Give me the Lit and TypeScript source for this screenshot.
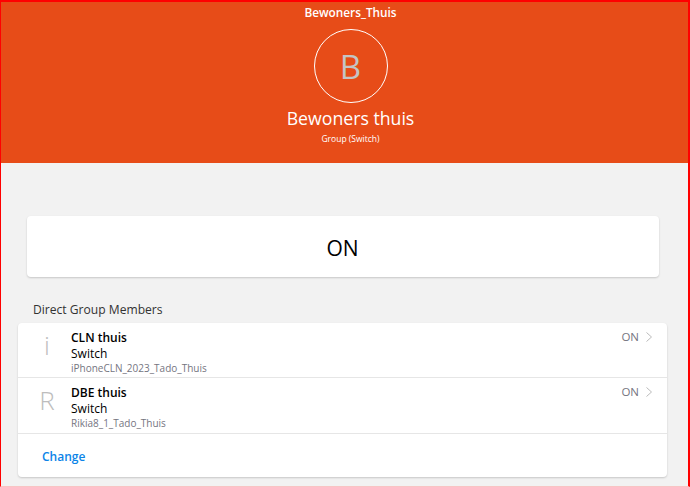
import { LitElement, html, css } from "lit";
import { customElement } from "lit/decorators.js";

const members = [
  { initial: "i", name: "CLN thuis", type: "Switch", id: "iPhoneCLN_2023_Tado_Thuis", state: "ON" },
  { initial: "R", name: "DBE thuis", type: "Switch", id: "Rikia8_1_Tado_Thuis", state: "ON" },
];

@customElement("app-root")
export class AppRoot extends LitElement {
  static styles = css`
    :host {
      display: block;
      box-sizing: border-box;
      width: 690px;
      height: 487px;
      overflow: hidden;
      border: solid #f00;
      border-width: 2px 2px 1px 1px;
      border-bottom-color: #f9c4c4;
      background: #f2f2f2;
      font-family: "Open Sans", "Noto Sans", sans-serif;
      color: #000;
    }

    .header {
      height: 161px;
      padding-left: 12px;
      background: #e74c18;
      color: #fff;
      display: flex;
      flex-direction: column;
      align-items: center;
    }

    .title {
      font-size: 11.8px;
      font-weight: 600;
      line-height: 16px;
      margin-top: 2px;
    }

    .avatar {
      box-sizing: border-box;
      width: 74px;
      height: 74px;
      margin-top: 9px;
      border: 1px solid #fff;
      border-radius: 50%;
      color: #c4c4c4;
      font-size: 33px;
      display: flex;
      align-items: center;
      justify-content: center;
    }

    .name {
      font-size: 17.7px;
      line-height: 24px;
      margin-top: 3px;
    }

    .sub {
      font-size: 8.5px;
      line-height: 12px;
      margin-top: 3px;
    }

    .toggle {
      margin: 53px 29px 0 26px;
      padding: 2px 1px 0 0;
      box-sizing: border-box;
      height: 61px;
      background: #fff;
      border-radius: 4px;
      box-shadow: 0 1px 2px rgba(0, 0, 0, 0.18);
      display: flex;
      align-items: center;
      justify-content: center;
      font-size: 21px;
    }

    .section {
      margin: 25px 0 0 32px;
      font-size: 12.1px;
      line-height: 16px;
      color: #333;
    }

    .card {
      margin: 5px 21px 0 17px;
      background: #fff;
      border-radius: 4px;
      box-shadow: 0 1px 2px rgba(0, 0, 0, 0.18);
    }

    .row {
      height: 54px;
      border-bottom: 1px solid #e6e6e6;
      display: flex;
    }

    .row + .row {
      height: 55px;
    }

    .icon {
      width: 53px;
      padding-left: 5px;
      box-sizing: border-box;
      color: #bdbdbd;
      font-size: 26px;
      font-weight: 300;
      line-height: 44px;
      text-align: center;
      flex: none;
    }

    .info {
      flex: 1;
      display: flex;
      flex-direction: column;
      font-size: 12px;
      line-height: 16px;
      padding-top: 7px;
    }

    .info b {
      font-weight: 600;
    }

    .id {
      font-size: 10px;
      line-height: 14px;
      margin-top: -1px;
      color: #75757f;
    }

    .state {
      display: flex;
      align-items: flex-start;
      gap: 7px;
      padding: 6px 15px 0 0;
      font-size: 11.5px;
      line-height: 16px;
      color: #75757f;
    }

    .state svg {
      width: 6px;
      height: 10px;
      margin-top: 3px;
    }

    .change {
      height: 42px;
      padding: 1px 0 0 24px;
      display: flex;
      align-items: center;
      font-size: 12px;
      font-weight: 600;
      color: #0b84e8;
    }
  `;

  render() {
    return html`
      <div class="header">
        <div class="title">Bewoners_Thuis</div>
        <div class="avatar">B</div>
        <div class="name">Bewoners thuis</div>
        <div class="sub">Group (Switch)</div>
      </div>
      <div class="toggle">ON</div>
      <div class="section">Direct Group Members</div>
      <div class="card">
        ${members.map(
          (m) => html`
            <div class="row">
              <div class="icon">${m.initial}</div>
              <div class="info">
                <b>${m.name}</b>
                <span>${m.type}</span>
                <span class="id">${m.id}</span>
              </div>
              <div class="state">
                ${m.state}
                <svg viewBox="0 0 6 10"><path d="M.5.5 5.5 5 .5 9.5" fill="none" stroke="#bbb" /></svg>
              </div>
            </div>
          `
        )}
        <div class="change">Change</div>
      </div>
    `;
  }
}
